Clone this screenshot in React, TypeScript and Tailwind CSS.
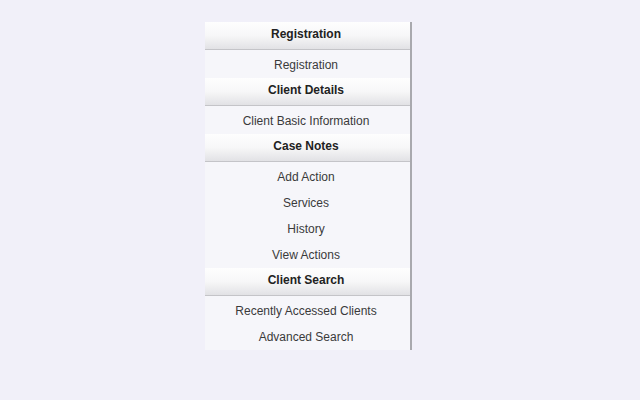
const SECTIONS = [
  { title: 'Registration', items: ['Registration'] },
  { title: 'Client Details', items: ['Client Basic Information'] },
  { title: 'Case Notes', items: ['Add Action', 'Services', 'History', 'View Actions'] },
  { title: 'Client Search', items: ['Recently Accessed Clients', 'Advanced Search'] },
];

export default function App() {
  return (
    <div className="h-[400px] w-[640px] bg-[#f1f0f9] pt-[22px] pl-[205px] font-['Liberation_Sans',Arial,sans-serif] text-[12px]">
      <div className="flex w-[207px] flex-col border-r-2 border-[#a9a9ae] bg-[#f6f6fa]">
        {SECTIONS.map((section) => (
          <div key={section.title} className="flex flex-col">
            <div className="h-[28px] border-b border-[#c4c4c8] bg-gradient-to-b from-[#fefefe] via-[#f7f7f8] to-[#e2e2e5] pt-[5px] pr-[3px] text-center font-bold leading-[14px] text-[#222]">
              {section.title}
            </div>
            <ul className="flex flex-col pt-[2px]">
              {section.items.map((item) => (
                <li key={item} className="h-[26px] pr-[3px] text-center leading-[26px] text-[#3a3a3a]">
                  {item}
                </li>
              ))}
            </ul>
          </div>
        ))}
      </div>
    </div>
  );
}
